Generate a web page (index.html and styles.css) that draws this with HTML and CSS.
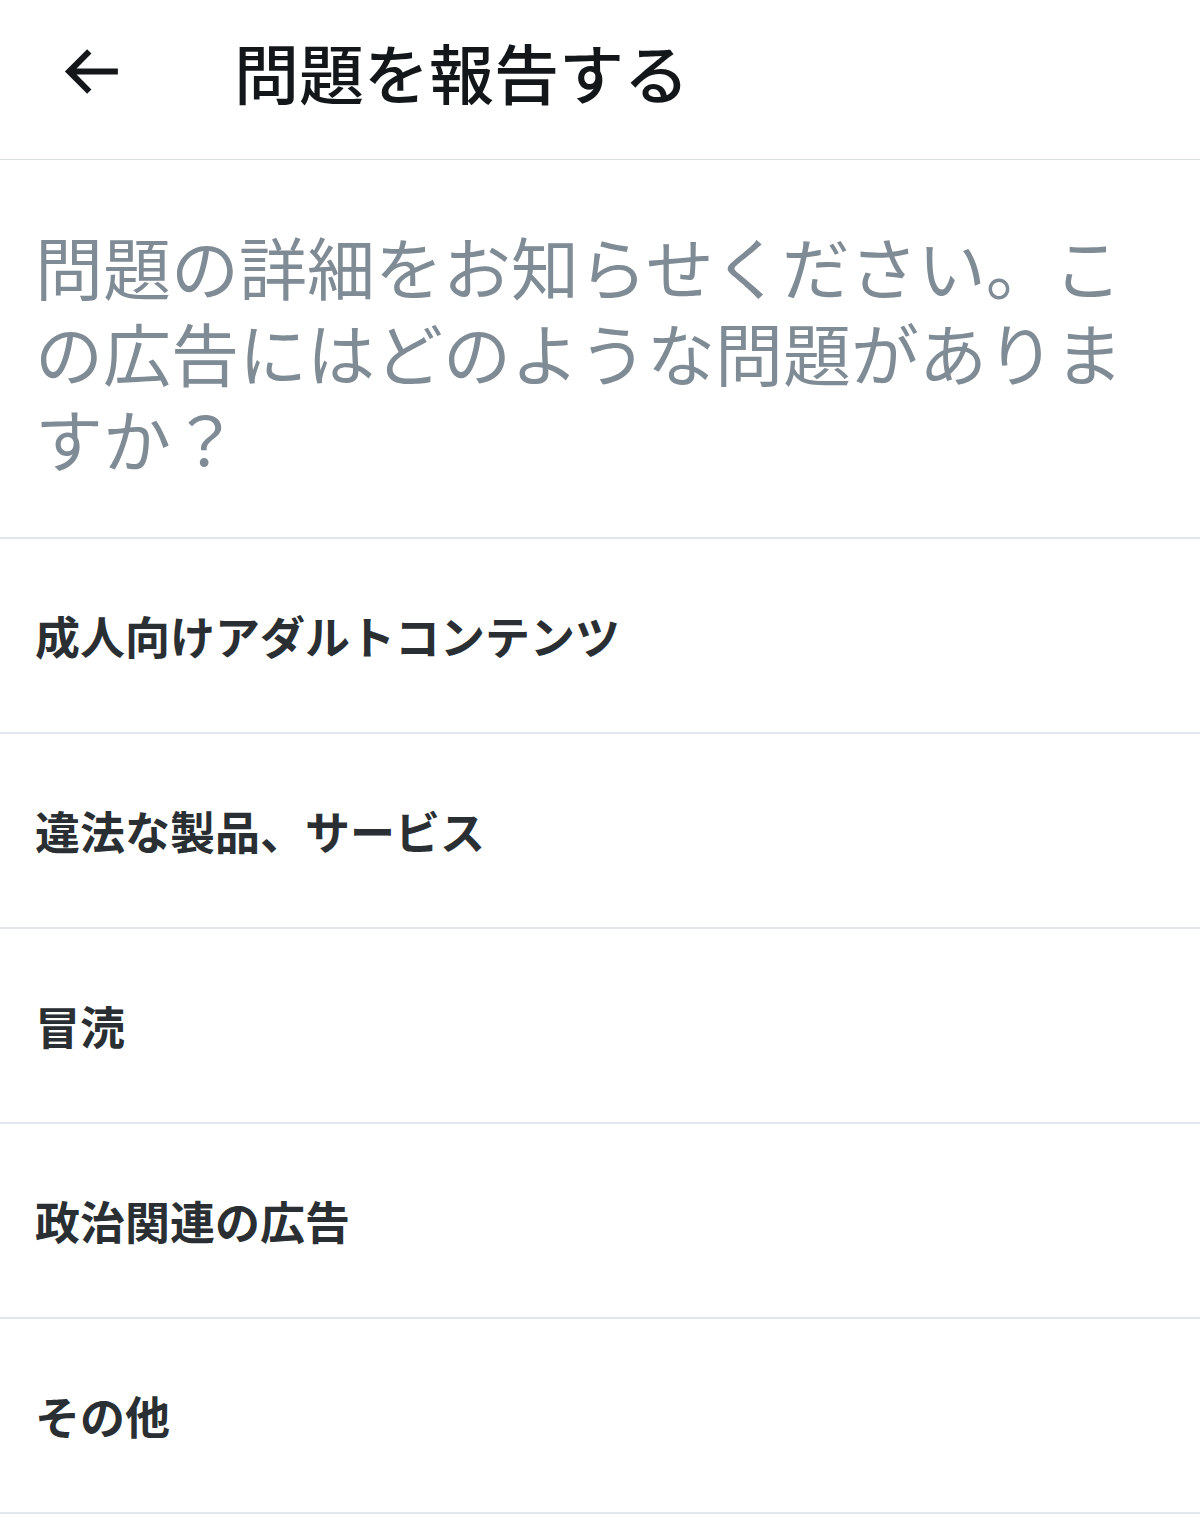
FILE: index.html
```html
<!DOCTYPE html>
<html lang="ja">
<head>
    <meta charset="UTF-8">
    <meta name="viewport" content="width=device-width, initial-scale=1.0">
    <title>問題を報告する</title>
    <link rel="stylesheet" href="styles.css">
</head>
<body>
    <div class="header">
        <button class="back-button" aria-label="戻る">
            <svg viewBox="0 0 24 24" width="73" height="73">
                <path d="M21 12H5.2 M11.6 5.4L5 12l6.6 6.6" fill="none" stroke="#14171a" stroke-width="2"/>
            </svg>
        </button>
        <h1 class="title">問題を報告する</h1>
    </div>

    <div class="description">
        問題の詳細をお知らせください。この広告にはどのような問題がありますか？
    </div>

    <ul class="option-list">
        <li class="option">成人向けアダルトコンテンツ</li>
        <li class="option">違法な製品、サービス</li>
        <li class="option">冒涜</li>
        <li class="option">政治関連の広告</li>
        <li class="option">その他</li>
    </ul>
</body>
</html>
```

FILE: styles.css
```css
body {
    font-family: "Noto Sans CJK JP", "Noto Sans", sans-serif;
    margin: 0;
    background-color: #ffffff;
    color: #14171a;
}

.header {
    display: flex;
    align-items: center;
    height: 160px;
    padding: 0 0 16px 54px;
    box-sizing: border-box;
    border-bottom: 1px solid #d9dedf;
}

.back-button {
    display: flex;
    padding: 0;
    border: none;
    background: none;
    cursor: pointer;
}

.title {
    margin: 0 0 0 107px;
    font-size: 65px;
    font-weight: 500;
    line-height: 1;
    color: #14171a;
}

.description {
    padding: 63px 50px 56px 35px;
    font-size: 68px;
    line-height: 86px;
    color: #7f8b95;
    border-bottom: 2px solid #e1e8ed;
}

.option-list {
    list-style: none;
    margin: 0;
    padding: 0;
}

.option {
    display: flex;
    align-items: center;
    height: 193px;
    padding-left: 35px;
    font-size: 45px;
    font-weight: 700;
    color: #292f33;
    border-bottom: 2px solid #e1e8ed;
}
```
